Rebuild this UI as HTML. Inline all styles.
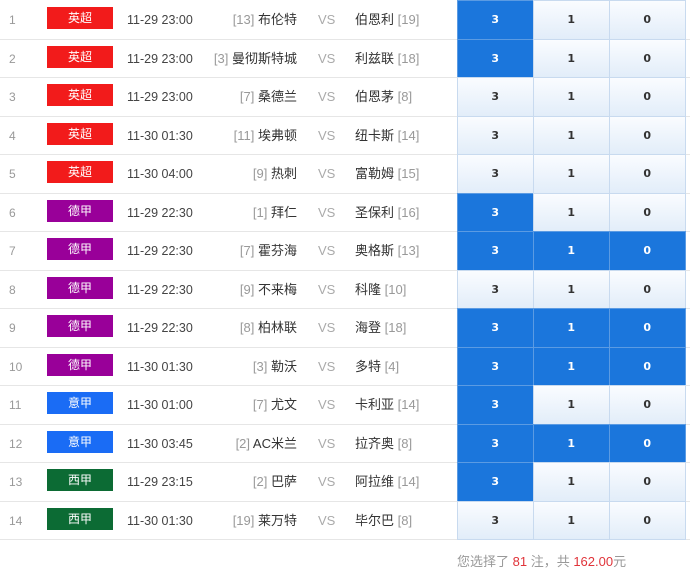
<!DOCTYPE html>
<html><head><meta charset="utf-8"><style>
*{margin:0;padding:0;box-sizing:border-box}
body{width:690px;height:573px;background:#fff;font-family:"Liberation Sans","Noto Sans CJK SC",sans-serif;font-size:12px;color:#333;overflow:hidden;position:relative}
.wrap{position:absolute;top:1px;left:0;width:690px}
.r{position:relative;height:38.5px;border-bottom:1px solid #e6e6e6}
.r>*{position:absolute}
.n,.t,.h,.vs,.a{top:0;height:38px;line-height:38px}
.n{left:9px;color:#999}
.b{left:47px;top:6px;width:66px;height:22px;line-height:22px;text-align:center;color:#fff;font-size:12px}
.y{background:#f21b1b}.d{background:#990099}.i{background:#1a6cf5}.x{background:#0c6b34}
.t{left:127px;color:#444;font-size:12.5px}
.h{right:393px;color:#333;white-space:nowrap;font-size:13px}
.vs{left:318px;color:#aaa;font-size:13px}
.a{left:355px;color:#333;white-space:nowrap;font-size:13px}
.g{color:#999}
.c{top:-1px;height:39.5px;width:76.5px;border:1px solid #c8daef;text-align:center;line-height:38px;font-weight:bold;font-family:"DejaVu Sans",sans-serif;font-size:11px;color:#333;background:linear-gradient(#fafcff,#e2edf9)}
.c1{left:457px}.c2{left:533px}.c3{left:609px}
.s{background:#1b76dc;color:#fff;border-color:#5b9be3}
.foot{position:absolute;top:551px;left:457px;color:#999;font-size:13px}
.foot b{color:#e0343a;font-weight:normal}
</style></head><body>
<div class="wrap">
<div class="r"><span class="n">1</span><span class="b y">英超</span><span class="t">11-29 23:00</span><span class="h"><span class="g">[13]</span> 布伦特</span><span class="vs">VS</span><span class="a">伯恩利 <span class="g">[19]</span></span><span class="c c1 s">3</span><span class="c c2">1</span><span class="c c3">0</span></div>
<div class="r"><span class="n">2</span><span class="b y">英超</span><span class="t">11-29 23:00</span><span class="h"><span class="g">[3]</span> 曼彻斯特城</span><span class="vs">VS</span><span class="a">利兹联 <span class="g">[18]</span></span><span class="c c1 s">3</span><span class="c c2">1</span><span class="c c3">0</span></div>
<div class="r"><span class="n">3</span><span class="b y">英超</span><span class="t">11-29 23:00</span><span class="h"><span class="g">[7]</span> 桑德兰</span><span class="vs">VS</span><span class="a">伯恩茅 <span class="g">[8]</span></span><span class="c c1">3</span><span class="c c2">1</span><span class="c c3">0</span></div>
<div class="r"><span class="n">4</span><span class="b y">英超</span><span class="t">11-30 01:30</span><span class="h"><span class="g">[11]</span> 埃弗顿</span><span class="vs">VS</span><span class="a">纽卡斯 <span class="g">[14]</span></span><span class="c c1">3</span><span class="c c2">1</span><span class="c c3">0</span></div>
<div class="r"><span class="n">5</span><span class="b y">英超</span><span class="t">11-30 04:00</span><span class="h"><span class="g">[9]</span> 热刺</span><span class="vs">VS</span><span class="a">富勒姆 <span class="g">[15]</span></span><span class="c c1">3</span><span class="c c2">1</span><span class="c c3">0</span></div>
<div class="r"><span class="n">6</span><span class="b d">德甲</span><span class="t">11-29 22:30</span><span class="h"><span class="g">[1]</span> 拜仁</span><span class="vs">VS</span><span class="a">圣保利 <span class="g">[16]</span></span><span class="c c1 s">3</span><span class="c c2">1</span><span class="c c3">0</span></div>
<div class="r"><span class="n">7</span><span class="b d">德甲</span><span class="t">11-29 22:30</span><span class="h"><span class="g">[7]</span> 霍芬海</span><span class="vs">VS</span><span class="a">奥格斯 <span class="g">[13]</span></span><span class="c c1 s">3</span><span class="c c2 s">1</span><span class="c c3 s">0</span></div>
<div class="r"><span class="n">8</span><span class="b d">德甲</span><span class="t">11-29 22:30</span><span class="h"><span class="g">[9]</span> 不来梅</span><span class="vs">VS</span><span class="a">科隆 <span class="g">[10]</span></span><span class="c c1">3</span><span class="c c2">1</span><span class="c c3">0</span></div>
<div class="r"><span class="n">9</span><span class="b d">德甲</span><span class="t">11-29 22:30</span><span class="h"><span class="g">[8]</span> 柏林联</span><span class="vs">VS</span><span class="a">海登 <span class="g">[18]</span></span><span class="c c1 s">3</span><span class="c c2 s">1</span><span class="c c3 s">0</span></div>
<div class="r"><span class="n">10</span><span class="b d">德甲</span><span class="t">11-30 01:30</span><span class="h"><span class="g">[3]</span> 勒沃</span><span class="vs">VS</span><span class="a">多特 <span class="g">[4]</span></span><span class="c c1 s">3</span><span class="c c2 s">1</span><span class="c c3 s">0</span></div>
<div class="r"><span class="n">11</span><span class="b i">意甲</span><span class="t">11-30 01:00</span><span class="h"><span class="g">[7]</span> 尤文</span><span class="vs">VS</span><span class="a">卡利亚 <span class="g">[14]</span></span><span class="c c1 s">3</span><span class="c c2">1</span><span class="c c3">0</span></div>
<div class="r"><span class="n">12</span><span class="b i">意甲</span><span class="t">11-30 03:45</span><span class="h"><span class="g">[2]</span> AC米兰</span><span class="vs">VS</span><span class="a">拉齐奥 <span class="g">[8]</span></span><span class="c c1 s">3</span><span class="c c2 s">1</span><span class="c c3 s">0</span></div>
<div class="r"><span class="n">13</span><span class="b x">西甲</span><span class="t">11-29 23:15</span><span class="h"><span class="g">[2]</span> 巴萨</span><span class="vs">VS</span><span class="a">阿拉维 <span class="g">[14]</span></span><span class="c c1 s">3</span><span class="c c2">1</span><span class="c c3">0</span></div>
<div class="r"><span class="n">14</span><span class="b x">西甲</span><span class="t">11-30 01:30</span><span class="h"><span class="g">[19]</span> 莱万特</span><span class="vs">VS</span><span class="a">毕尔巴 <span class="g">[8]</span></span><span class="c c1">3</span><span class="c c2">1</span><span class="c c3">0</span></div>
</div>
<div class="foot">您选择了 <b>81</b> 注，共 <b>162.00</b>元</div>
</body></html>
